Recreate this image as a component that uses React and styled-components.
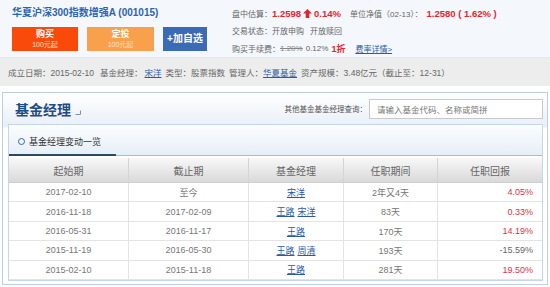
import styled, { createGlobalStyle } from "styled-components";

const GlobalStyle = createGlobalStyle`
  html, body {
    margin: 0;
    padding: 0;
    background: #ffffff;
  }
  body {
    font-family: "Liberation Sans", "Noto Sans CJK SC", sans-serif;
    color: #555;
  }
`;

const RED = "#e3262d";
const LINK = "#2b5aa6";

const Page = styled.div`
  width: 550px;
  height: 287px;
  overflow: hidden;
`;

const Header = styled.div`
  display: flex;
  height: 58px;
  box-sizing: border-box;
  padding: 5px 0 0 12px;
  background: #f4f7fb;
  border-bottom: 1px solid #e2e7ee;
`;

const HeaderLeft = styled.div`
  width: 220px;
  flex: none;
`;

const Title = styled.div`
  font-size: 10px;
  font-weight: bold;
  line-height: 16px;
  color: #2d63ae;
  white-space: nowrap;
`;

const ButtonRow = styled.div`
  display: flex;
  gap: 9px;
  margin-top: 6px;
`;

const ActionButton = styled.div`
  width: ${(p) => p.$w}px;
  height: 24px;
  background: ${(p) => p.$bg};
  color: #fff;
  display: flex;
  flex-direction: column;
  align-items: center;
  justify-content: center;
  line-height: 1;
`;

const BtnMain = styled.span`
  font-size: ${(p) => (p.$big ? 10 : 9)}px;
  font-weight: bold;
`;

const BtnSub = styled.span`
  font-size: 7px;
  margin-top: 2px;
  color: #fde3d0;
`;

const HeaderRight = styled.div`
  display: flex;
  flex-direction: column;
`;

const InfoLine = styled.div`
  display: flex;
  align-items: center;
  height: ${(p) => p.$h || 16}px;
  font-size: 8px;
  color: #666;
  white-space: nowrap;
`;

const RedVal = styled.span`
  color: ${RED};
  font-weight: bold;
  font-size: ${(p) => p.$size || 9.5}px;
  margin-right: ${(p) => p.$mr || 0}px;
`;

const Gap = styled.span`
  display: inline-block;
  width: ${(p) => p.$w}px;
`;

const Strike = styled.span`
  text-decoration: line-through;
  color: #888;
  margin-right: 3px;
`;

const Link = styled.a`
  color: ${LINK};
  text-decoration: underline;
  cursor: pointer;
`;

const InfoBar = styled.div`
  height: 28px;
  display: flex;
  align-items: center;
  padding-left: 8px;
  background: #ededed;
  font-size: 8.5px;
  color: #666;
  white-space: nowrap;
`;

const Panel = styled.div`
  margin: 6px 2px 0;
  height: 193px;
  box-sizing: border-box;
  border: 1px solid #bccfe1;
  padding: 0 4px 3px 5px;
  display: flex;
  flex-direction: column;
  background: linear-gradient(#ffffff 0px, #e8eff7 34px, #ffffff 35px);
`;

const PanelHead = styled.div`
  height: 34px;
  display: flex;
  align-items: center;
  justify-content: space-between;
  padding: 0 0 0 7px;
`;

const Heading = styled.div`
  display: flex;
  align-items: center;
  font-size: 14px;
  font-weight: bold;
  color: #1e4c84;
`;

const Corner = styled.svg`
  margin: 7px 0 0 4px;
`;

const Search = styled.div`
  display: flex;
  align-items: center;
  gap: 2px;
  font-size: 7.5px;
  color: #555;
`;

const SearchInput = styled.div`
  width: 174px;
  height: 20px;
  box-sizing: border-box;
  border: 1px solid #c9c9c9;
  background: #fff;
  font-size: 8.5px;
  color: #777;
  display: flex;
  align-items: center;
  padding-left: 7px;
`;

const InnerBox = styled.div`
  flex: 1;
  border: 1px solid #c8d6e4;
  background: #fff;
  display: flex;
  flex-direction: column;
`;

const TabBar = styled.div`
  height: 30px;
  display: flex;
  align-items: flex-end;
  background: linear-gradient(#fbfdfe, #e6eef7);
  border-bottom: 1px solid #a8bcd0;
`;

const Tab = styled.div`
  width: 107px;
  height: 28px;
  box-sizing: border-box;
  display: flex;
  align-items: center;
  gap: 4px;
  padding-left: 9px;
  border-bottom: 2px solid #2b4865;
  margin-bottom: -1px;
  font-size: 9px;
  color: #333;
`;

const Ring = styled.span`
  width: 5px;
  height: 5px;
  border: 1px solid #2f6ab0;
  border-radius: 50%;
`;

const Table = styled.div`
  margin-top: 2px;
`;

const Row = styled.div`
  display: grid;
  grid-template-columns: 120px 120px 95px 94px 1fr;
  height: ${(p) => (p.$head ? 25 : 19.4)}px;
  box-sizing: border-box;
  border-bottom: 1px solid ${(p) => (p.$head ? "#cfcfcf" : "#e3e3e3")};
  background: ${(p) => (p.$head ? "linear-gradient(#f8f8f8, #d9d9d9)" : "#fff")};
  font-size: ${(p) => (p.$head ? 10 : 9)}px;
  color: ${(p) => (p.$head ? "#666" : "#777")};
`;

const Cell = styled.div`
  display: flex;
  align-items: center;
  justify-content: ${(p) => (p.$right ? "flex-end" : "center")};
  padding-right: ${(p) => (p.$right ? 9 : 0)}px;
  gap: 3px;
  border-right: 1px solid ${(p) => (p.$head ? "#d4d4d4" : "#e3e3e3")};
  &:last-child {
    border-right: none;
  }
`;

const Ret = styled.span`
  color: ${(p) => (p.$neg ? "#666" : "#d8333f")};
`;

const rows = [
  ["2017-02-10", "至今", ["宋洋"], "2年又4天", "4.05%"],
  ["2016-11-18", "2017-02-09", ["王路", "宋洋"], "83天", "0.33%"],
  ["2016-05-31", "2016-11-17", ["王路"], "170天", "14.19%"],
  ["2015-11-19", "2016-05-30", ["王路", "周清"], "193天", "-15.59%"],
  ["2015-02-10", "2015-11-18", ["王路"], "281天", "19.50%"],
];

const UpArrow = () => (
  <svg width="9" height="9" viewBox="0 0 10 10" style={{ margin: "0 2px" }}>
    <path d="M5 0 L10 5 L7 5 L7 10 L3 10 L3 5 L0 5 Z" fill={RED} />
  </svg>
);

export default function App() {
  return (
    <Page>
      <GlobalStyle />
      <Header>
        <HeaderLeft>
          <Title>华夏沪深300指数增强A (001015)</Title>
          <ButtonRow>
            <ActionButton $w={66} $bg="#fa4a0a">
              <BtnMain>购买</BtnMain>
              <BtnSub>100元起</BtnSub>
            </ActionButton>
            <ActionButton $w={67} $bg="#f8a04c">
              <BtnMain>定投</BtnMain>
              <BtnSub>100元起</BtnSub>
            </ActionButton>
            <ActionButton $w={44} $bg="#3b6bb4">
              <BtnMain $big>+加自选</BtnMain>
            </ActionButton>
          </ButtonRow>
        </HeaderLeft>
        <HeaderRight>
          <InfoLine>
            盘中估算：<RedVal>1.2598</RedVal>
            <UpArrow />
            <RedVal $mr={9}>0.14%</RedVal>
            单位净值（02-13）：<Gap $w={4} />
            <RedVal>1.2580 ( 1.62% )</RedVal>
          </InfoLine>
          <InfoLine $h={19}>
            交易状态：开放申购<Gap $w={6} />开放赎回
          </InfoLine>
          <InfoLine>
            购买手续费：<Strike>1.20%</Strike>
            <span>0.12%</span>
            <Gap $w={3} />
            <RedVal $size={9} $mr={10}>1折</RedVal>
            <Link>费率详情&gt;</Link>
          </InfoLine>
        </HeaderRight>
      </Header>

      <InfoBar>
        成立日期：2015-02-10<Gap $w={6} />基金经理：<Gap $w={2} />
        <Link>宋洋</Link>
        <Gap $w={4} />类型：股票指数<Gap $w={4} />管理人：<Link>华夏基金</Link>
        <Gap $w={4} />资产规模：3.48亿元（截止至：12-31）
      </InfoBar>

      <Panel>
        <PanelHead>
          <Heading>
            基金经理
            <Corner width="6" height="5" viewBox="0 0 6 5">
              <path d="M0.5 4.5 L5.5 4.5 L5.5 0.5" fill="none" stroke="#7a93b0" strokeWidth="1" />
            </Corner>
          </Heading>
          <Search>
            其他基金基金经理查询：
            <SearchInput>请输入基金代码、名称或简拼</SearchInput>
          </Search>
        </PanelHead>
        <InnerBox>
          <TabBar>
            <Tab>
              <Ring />
              基金经理变动一览
            </Tab>
          </TabBar>
          <Table>
            <Row $head>
              <Cell $head>起始期</Cell>
              <Cell $head>截止期</Cell>
              <Cell $head>基金经理</Cell>
              <Cell $head>任职期间</Cell>
              <Cell $head>任职回报</Cell>
            </Row>
            {rows.map((r) => (
              <Row key={r[0]}>
                <Cell>{r[0]}</Cell>
                <Cell>{r[1]}</Cell>
                <Cell>
                  {r[2].map((m) => (
                    <Link key={m}>{m}</Link>
                  ))}
                </Cell>
                <Cell>{r[3]}</Cell>
                <Cell $right>
                  <Ret $neg={r[4].startsWith("-")}>{r[4]}</Ret>
                </Cell>
              </Row>
            ))}
          </Table>
        </InnerBox>
      </Panel>
    </Page>
  );
}
